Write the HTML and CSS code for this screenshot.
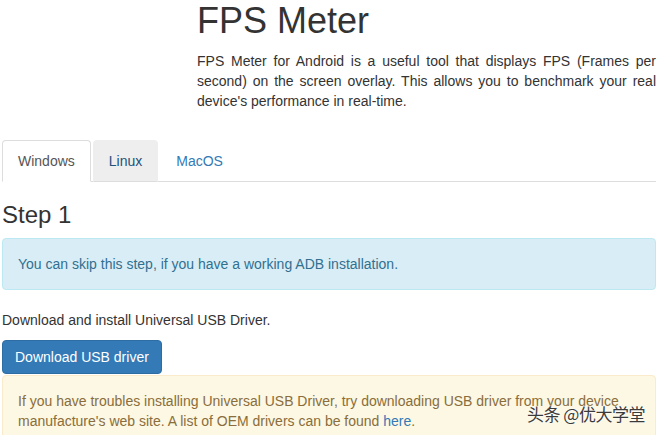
FILE: index.html
```html
<!DOCTYPE html>
<html lang="en">
<head>
<meta charset="utf-8">
<title>FPS Meter</title>
<link rel="stylesheet" href="styles.css">
</head>
<body>
<div class="page">
  <header class="intro">
    <div class="intro-side"></div>
    <div class="intro-main">
      <h1 class="title">FPS Meter</h1>
      <p class="lead">FPS Meter for Android is a useful tool that displays FPS (Frames per second) on the screen overlay. This allows you to benchmark your real device's performance in real-time.</p>
    </div>
  </header>

  <ul class="tabs">
    <li class="tab tab-active"><a href="#">Windows</a></li>
    <li class="tab tab-hover"><a href="#">Linux</a></li>
    <li class="tab"><a href="#">MacOS</a></li>
  </ul>

  <section class="tab-pane">
    <h3 class="step">Step 1</h3>
    <div class="alert alert-info">You can skip this step, if you have a working ADB installation.</div>
    <p class="text">Download and install Universal USB Driver.</p>
    <div class="btn-row"><a class="btn" href="#">Download USB driver</a></div>
    <div class="alert alert-warning">If you have troubles installing Universal USB Driver, try downloading USB driver from your device manufacture's web site. A list of OEM drivers can be found <a class="link" href="#">here</a>.</div>
  </section>
</div>
<div class="watermark">头条 @优大学堂</div>
</body>
</html>
```

FILE: styles.css
```css
* { box-sizing: border-box; }

html, body {
  margin: 0;
  padding: 0;
  background: #fff;
}

body {
  font-family: "Liberation Sans", Arial, "Noto Sans CJK SC", sans-serif;
  font-size: 14px;
  line-height: 20px;
  color: #333;
  overflow: hidden;
}

.page {
  width: 654px;
  margin-left: 2px;
}

.intro {
  display: grid;
  grid-template-columns: 195px 1fr;
  margin-bottom: 29px;
}

.title {
  margin: 1px 0 10px;
  font-size: 36px;
  font-weight: 500;
  line-height: 39.6px;
  color: #333;
}

.lead {
  margin: 0;
  text-align: justify;
  line-height: 20px;
}

.tabs {
  list-style: none;
  margin: 0;
  padding: 0;
  display: flex;
  border-bottom: 1px solid #ddd;
}

.tab {
  margin-right: 2px;
  margin-bottom: -1px;
}

.tab a {
  display: block;
  padding: 10px 15px;
  line-height: 20px;
  border: 1px solid transparent;
  border-radius: 4px 4px 0 0;
  color: #337ab7;
  text-decoration: none;
}

.tab-active a {
  color: #555;
  background: #fff;
  border-color: #ddd #ddd transparent;
}

.tab-hover a {
  color: #23527c;
  background: #eee;
  border-color: #eee #eee #ddd;
}

.tab-pane {
  padding-top: 20px;
}

.step {
  margin: 0 0 10px;
  font-size: 24px;
  font-weight: 500;
  line-height: 26.4px;
}

.alert {
  padding: 15px;
  border: 1px solid transparent;
  border-radius: 4px;
}

.alert-info {
  color: #31708f;
  background: #d9edf7;
  border-color: #bce8f1;
  margin-bottom: 20px;
}

.alert-warning {
  color: #8a6d3b;
  background: #fcf8e3;
  border-color: #faebcc;
  margin-top: 1px;
}

.text {
  margin: 0 0 10px;
}

.btn-row {
  display: flex;
}

.btn {
  display: block;
  padding: 6px 12px;
  line-height: 20px;
  font-size: 14px;
  color: #fff;
  background: #337ab7;
  border: 1px solid #2e6da4;
  border-radius: 4px;
  text-decoration: none;
}

.link {
  color: #337ab7;
  text-decoration: none;
}

.watermark {
  position: absolute;
  left: 527px;
  top: 404px;
  font-family: "Noto Sans CJK SC", sans-serif;
  font-size: 17px;
  line-height: 20px;
  color: #3a3a3a;
  text-shadow: 0 0 2px #fff, 0 0 2px #fff;
  letter-spacing: -0.5px;
}
```
